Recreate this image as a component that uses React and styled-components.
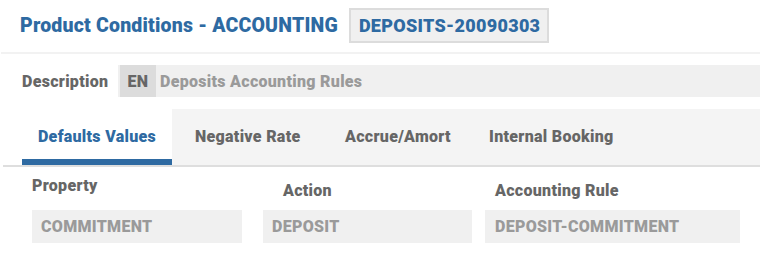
import React from "react";
import styled, { createGlobalStyle } from "styled-components";

const Global = createGlobalStyle`
  html, body { margin: 0; padding: 0; background: #fff; }
  body {
    font-family: Roboto, "Liberation Sans", Arial, sans-serif;
    font-weight: 900;
    letter-spacing: 0.3px;
  }
  * { box-sizing: border-box; }
`;

const Page = styled.div`
  width: 760px;
  height: 262px;
  overflow: hidden;
`;

const Header = styled.header`
  display: flex;
  align-items: center;
  gap: 11px;
  height: 54px;
  padding: 0 0 2px 19px;
  margin-left: 1px;
  border-bottom: 2px solid #f2f2f2;
`;

const Title = styled.h1`
  margin: 0;
  font-size: 19.5px;
  font-weight: 900;
  letter-spacing: 0.2px;
  color: #2e6aa2;
`;

const Badge = styled.div`
  display: flex;
  align-items: center;
  height: 35px;
  padding: 0 7px 0 8px;
  border: 2px solid #dcdcdc;
  background: #f0f0f0;
  font-size: 18px;
  color: #2e6aa2;
`;

const DescRow = styled.div`
  display: flex;
  align-items: center;
  margin-top: 11px;
  padding-left: 22px;
`;

const Label = styled.div`
  width: 96px;
  font-size: 16px;
  color: #666;
`;

const DescBox = styled.div`
  flex: 1;
  display: flex;
  height: 32px;
  background: #f0f0f0;
  padding-left: 2px;
`;

const Lang = styled.div`
  display: flex;
  align-items: center;
  justify-content: center;
  width: 36px;
  background: #dcdcdc;
  font-size: 16px;
  color: #666;
`;

const DescText = styled.div`
  display: flex;
  align-items: center;
  padding-left: 4px;
  font-size: 16px;
  color: #9a9a9a;
`;

const TabBar = styled.nav`
  display: flex;
  margin: 12px 0 0 3px;
  padding-left: 19px;
  border-bottom: 2px solid #dedede;
`;

const TabList = styled.div`
  flex: 1;
  display: flex;
  height: 56px;
  background: #f4f4f4;
`;

const Tab = styled.div`
  display: flex;
  align-items: center;
  justify-content: ${p => (p.$active ? "center" : "flex-start")};
  width: ${p => p.$width}px;
  padding-left: ${p => (p.$active ? 0 : 23)}px;
  padding-top: 5px;
  font-size: 16px;
  color: ${p => (p.$active ? "#2e6aa2" : "#666")};
  background: ${p => (p.$active ? "#fff" : "transparent")};
  border-bottom: 6px solid ${p => (p.$active ? "#2e6aa2" : "transparent")};
`;

const Grid = styled.div`
  display: grid;
  grid-template-columns: 231px 222px 255px;
  padding-left: 32px;
  margin-top: 9px;
`;

const ColHead = styled.div`
  height: 34px;
  padding-left: ${p => p.$indent}px;
  padding-top: ${p => p.$top}px;
  font-size: 16px;
  color: #666;
`;

const Field = styled.div`
  display: flex;
  align-items: center;
  width: ${p => p.$width}px;
  height: 33px;
  padding-left: ${p => p.$pad}px;
  background: #f0f0f0;
  font-size: 16px;
  color: #9a9a9a;
`;

const tabs = [
  { label: "Defaults Values", width: 150, active: true },
  { label: "Negative Rate", width: 150 },
  { label: "Accrue/Amort", width: 144 },
  { label: "Internal Booking", width: 160 },
];

const columns = [
  { head: "Property", indent: 0, top: 0, value: "COMMITMENT", width: 210, pad: 9 },
  { head: "Action", indent: 20, top: 5, value: "DEPOSIT", width: 209, pad: 9 },
  { head: "Accounting Rule", indent: 10, top: 5, value: "DEPOSIT-COMMITMENT", width: 255, pad: 10 },
];

export default function App() {
  return (
    <Page>
      <Global />
      <Header>
        <Title>Product Conditions - ACCOUNTING</Title>
        <Badge>DEPOSITS-20090303</Badge>
      </Header>
      <DescRow>
        <Label>Description</Label>
        <DescBox>
          <Lang>EN</Lang>
          <DescText>Deposits Accounting Rules</DescText>
        </DescBox>
      </DescRow>
      <TabBar>
        <TabList>
          {tabs.map(t => (
            <Tab key={t.label} $active={t.active} $width={t.width}>
              {t.label}
            </Tab>
          ))}
        </TabList>
      </TabBar>
      <Grid>
        {columns.map(c => (
          <ColHead key={c.head} $indent={c.indent} $top={c.top}>
            {c.head}
          </ColHead>
        ))}
        {columns.map(c => (
          <Field key={c.value} $width={c.width} $pad={c.pad}>
            {c.value}
          </Field>
        ))}
      </Grid>
    </Page>
  );
}
